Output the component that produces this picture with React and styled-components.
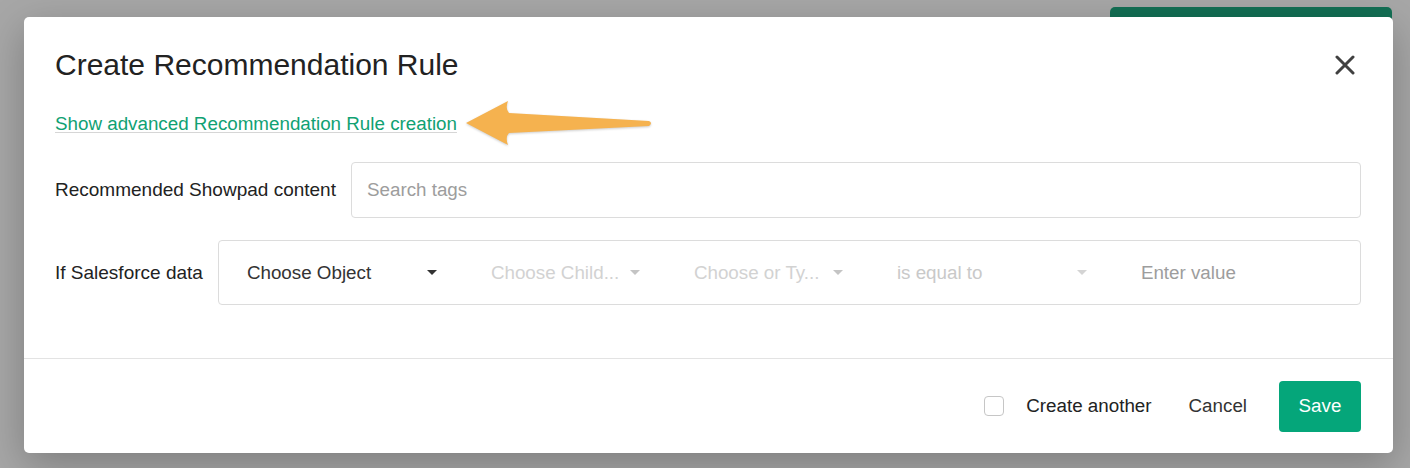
import React from 'react';
import styled, { createGlobalStyle } from 'styled-components';

const GlobalStyle = createGlobalStyle`
	html, body {
		margin: 0;
		padding: 0;
		background: #a7a7a7;
	}
	body {
		font-family: "Liberation Sans", Arial, sans-serif;
		color: #222;
	}
`;

const Page = styled.div`
	position: relative;
	min-height: 468px;
	padding: 17px 17px 0 24px;
	box-sizing: border-box;
	overflow: hidden;
`;

const BehindButton = styled.div`
	position: absolute;
	top: 7px;
	left: 1110px;
	width: 282px;
	height: 40px;
	border-radius: 5px;
	background: #136f54;
`;

const Modal = styled.div`
	position: relative;
	z-index: 1;
	width: 1369px;
	height: 436px;
	background: #fff;
	border-radius: 5px;
	box-shadow: 0 12px 40px rgba(0, 0, 0, 0.25);
	display: flex;
	flex-direction: column;
`;

const Body = styled.div`
	padding: 30px 32px 0 31px;
	height: 342px;
	box-sizing: border-box;
	display: flex;
	flex-direction: column;
	border-bottom: 1px solid #e3e3e3;
`;

const Header = styled.div`
	display: flex;
	align-items: center;
	justify-content: space-between;
	height: 36px;
`;

const Title = styled.h2`
	margin: 0;
	font-size: 30px;
	line-height: 36px;
	font-weight: 400;
	color: #222;
`;

const CloseButton = styled.button`
	border: none;
	background: none;
	padding: 0;
	margin-right: 6px;
	width: 20px;
	height: 20px;
	display: flex;
	cursor: pointer;
`;

const LinkRow = styled.div`
	display: flex;
	align-items: center;
	margin-top: 29px;
	height: 24px;
`;

const AdvancedLink = styled.a`
	font-size: 18.8px;
	line-height: 24px;
	color: #10a173;
	text-decoration: underline;
	text-decoration-color: #d6d6d6;
	text-underline-offset: 2px;
	cursor: pointer;
`;

const Arrow = styled.svg`
	flex: none;
	margin-left: 6px;
	filter: drop-shadow(0 1px 1px rgba(0, 0, 0, 0.2));
`;

const FormRow = styled.div`
	display: flex;
	align-items: center;
	gap: 15px;
	margin-top: ${p => p.$top}px;
`;

const Label = styled.span`
	font-size: 19px;
	color: #222;
	white-space: nowrap;
`;

const Field = styled.div`
	flex: 1;
	height: ${p => p.$height}px;
	border: 1px solid #dcdcdc;
	border-radius: 4px;
	box-sizing: border-box;
	display: flex;
	align-items: center;
`;

const Placeholder = styled.span`
	padding-left: 15px;
	font-size: 18.8px;
	color: #9d9d9d;
`;

const SegmentGrid = styled.div`
	flex: 1;
	height: 100%;
	display: grid;
	grid-template-columns: 244px 203px 203px 244px 1fr;
`;

const Segment = styled.div`
	display: flex;
	align-items: center;
	justify-content: space-between;
	padding: 0 26px 0 28px;
	font-size: 18.8px;
	color: ${p => p.$color};
	white-space: nowrap;
`;

const Caret = styled.span`
	width: 0;
	height: 0;
	border-left: 5px solid transparent;
	border-right: 5px solid transparent;
	border-top: 5px solid ${p => p.$color};
`;

const Footer = styled.div`
	flex: 1;
	display: flex;
	align-items: center;
	justify-content: flex-end;
	padding-right: 32px;
`;

const CheckLabel = styled.label`
	display: flex;
	align-items: center;
	gap: 22px;
	font-size: 18.8px;
	color: #222;
	cursor: pointer;
`;

const CheckBox = styled.span`
	width: 20px;
	height: 20px;
	box-sizing: border-box;
	border: 1px solid #c6c6c6;
	border-radius: 4px;
	background: #fff;
`;

const CancelButton = styled.button`
	border: none;
	background: none;
	font-family: inherit;
	font-size: 18.8px;
	color: #333;
	padding: 0;
	margin-left: 37px;
	cursor: pointer;
`;

const SaveButton = styled.button`
	margin-left: 32px;
	width: 82px;
	height: 51px;
	border: none;
	border-radius: 4px;
	background: #05a67a;
	color: #fff;
	font-family: inherit;
	font-size: 18.8px;
	cursor: pointer;
`;

const segments = [
	{ text: 'Choose Object', color: '#333', caret: '#333' },
	{ text: 'Choose Child...', color: '#d2d2d2', caret: '#c4c4c4' },
	{ text: 'Choose or Ty...', color: '#d2d2d2', caret: '#c4c4c4' },
	{ text: 'is equal to', color: '#c9c9c9', caret: '#d4d4d4' },
	{ text: 'Enter value', color: '#9d9d9d' },
];

function App() {
	return (
		<>
			<GlobalStyle />
			<Page>
				<BehindButton />
				<Modal>
					<Body>
						<Header>
							<Title>Create Recommendation Rule</Title>
							<CloseButton aria-label="Close">
								<svg width="20" height="20" viewBox="0 0 20 20">
									<path d="M2 2 L18 18 M18 2 L2 18" stroke="#404040" strokeWidth="3" strokeLinecap="round" />
								</svg>
							</CloseButton>
						</Header>
						<LinkRow>
							<AdvancedLink>Show advanced Recommendation Rule creation</AdvancedLink>
							<Arrow width="192" height="50" viewBox="462 99 192 50">
								<path
									d="M465 123 L507 101 Q504 109 508 113 L648 121 Q652 123 648 126 L508 133 Q504 137 507 145 Z"
									fill="#f5b24f"
								/>
							</Arrow>
						</LinkRow>
						<FormRow $top={26}>
							<Label>Recommended Showpad content</Label>
							<Field $height={56}>
								<Placeholder>Search tags</Placeholder>
							</Field>
						</FormRow>
						<FormRow $top={22}>
							<Label>If Salesforce data</Label>
							<Field $height={65}>
								<SegmentGrid>
									{segments.map(s => (
										<Segment key={s.text} $color={s.color}>
											<span>{s.text}</span>
											{s.caret && <Caret $color={s.caret} />}
										</Segment>
									))}
								</SegmentGrid>
							</Field>
						</FormRow>
					</Body>
					<Footer>
						<CheckLabel>
							<CheckBox />
							Create another
						</CheckLabel>
						<CancelButton>Cancel</CancelButton>
						<SaveButton>Save</SaveButton>
					</Footer>
				</Modal>
			</Page>
		</>
	);
}

export default App;
